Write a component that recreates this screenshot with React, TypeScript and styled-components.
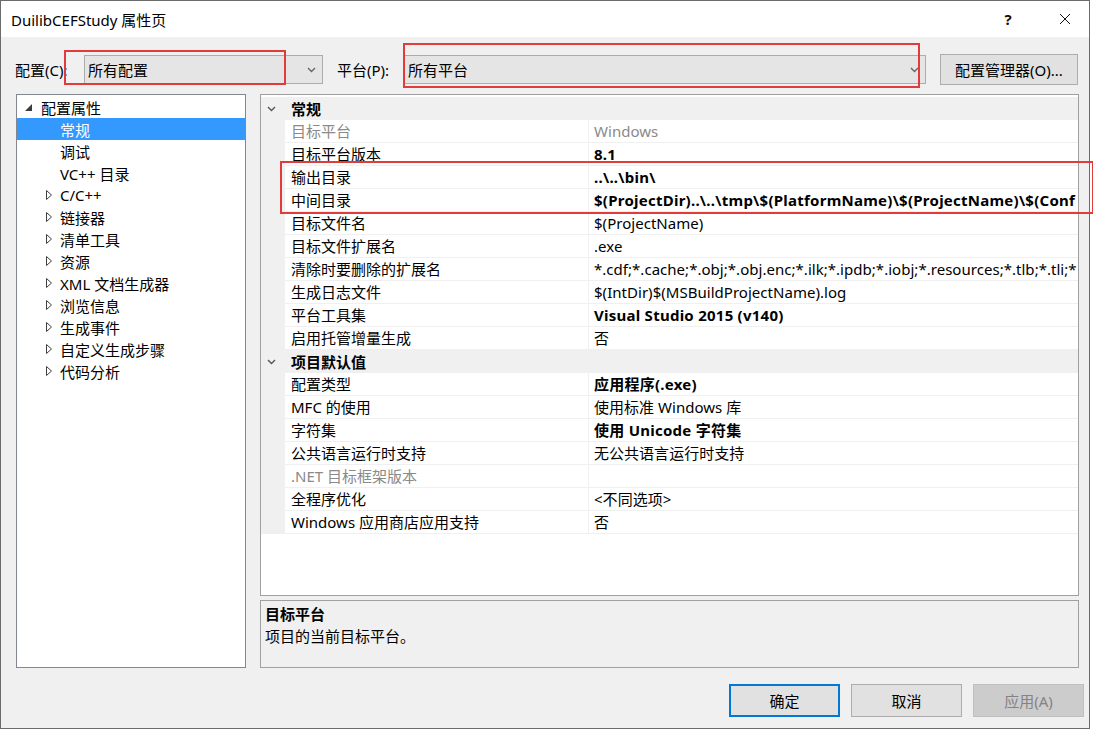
import * as React from "react"
import styled, { createGlobalStyle, css } from "styled-components"

const GlobalStyle = createGlobalStyle`
  html, body {
    margin: 0;
    padding: 0;
    background: #ffffff;
  }
  body {
    font-family: "Noto Sans", "Noto Sans CJK SC", sans-serif;
    font-size: 15px;
    color: #000;
  }
  * {
    box-sizing: border-box;
  }
`

type TreeItem = { label: string; level: 0 | 1; toggle?: "open" | "closed"; selected?: boolean }

const treeItems: TreeItem[] = [
  { label: "配置属性", level: 0, toggle: "open" },
  { label: "常规", level: 1, selected: true },
  { label: "调试", level: 1 },
  { label: "VC++ 目录", level: 1 },
  { label: "C/C++", level: 1, toggle: "closed" },
  { label: "链接器", level: 1, toggle: "closed" },
  { label: "清单工具", level: 1, toggle: "closed" },
  { label: "资源", level: 1, toggle: "closed" },
  { label: "XML 文档生成器", level: 1, toggle: "closed" },
  { label: "浏览信息", level: 1, toggle: "closed" },
  { label: "生成事件", level: 1, toggle: "closed" },
  { label: "自定义生成步骤", level: 1, toggle: "closed" },
  { label: "代码分析", level: 1, toggle: "closed" },
]

type Prop = { name: string; value?: string; bold?: boolean; disabled?: boolean }
type Category = { title: string; props: Prop[] }

// values are cut where the grid column ends in the original dialog
const categories: Category[] = [
  {
    title: "常规",
    props: [
      { name: "目标平台", value: "Windows", disabled: true },
      { name: "目标平台版本", value: "8.1", bold: true },
      { name: "输出目录", value: "..\\..\\bin\\", bold: true },
      {
        name: "中间目录",
        value: "$(ProjectDir)..\\..\\tmp\\$(PlatformName)\\$(ProjectName)\\$(Conf",
        bold: true,
      },
      { name: "目标文件名", value: "$(ProjectName)" },
      { name: "目标文件扩展名", value: ".exe" },
      {
        name: "清除时要删除的扩展名",
        value: "*.cdf;*.cache;*.obj;*.obj.enc;*.ilk;*.ipdb;*.iobj;*.resources;*.tlb;*.tli;*",
      },
      { name: "生成日志文件", value: "$(IntDir)$(MSBuildProjectName).log" },
      { name: "平台工具集", value: "Visual Studio 2015 (v140)", bold: true },
      { name: "启用托管增量生成", value: "否" },
    ],
  },
  {
    title: "项目默认值",
    props: [
      { name: "配置类型", value: "应用程序(.exe)", bold: true },
      { name: "MFC 的使用", value: "使用标准 Windows 库" },
      { name: "字符集", value: "使用 Unicode 字符集", bold: true },
      { name: "公共语言运行时支持", value: "无公共语言运行时支持" },
      { name: ".NET 目标框架版本", value: "", disabled: true },
      { name: "全程序优化", value: "<不同选项>" },
      { name: "Windows 应用商店应用支持", value: "否" },
    ],
  },
]

const Window = styled.div`
  position: relative;
  width: 1090px;
  height: 729px;
  border: 1px solid #6b6b6b;
  display: flex;
  flex-direction: column;
  background: #f0f0f0;
`

const TitleBar = styled.div`
  height: 36px;
  background: #ffffff;
  display: flex;
  align-items: center;
  padding-left: 10px;
`

const Title = styled.div`
  flex: 1;
  font-size: 15px;
  color: #000;
`

const TitleButton = styled.div<{ $gapRight?: number }>`
  width: 48px;
  height: 36px;
  margin-right: ${(p) => p.$gapRight ?? 0}px;
  display: flex;
  align-items: center;
  justify-content: center;
  font-size: 15px;
  font-weight: bold;
  color: #111;
`

const Body = styled.div`
  flex: 1;
  display: flex;
  flex-direction: column;
  padding: 17px 0 0 14px;
`

const Toolbar = styled.div`
  display: flex;
  align-items: center;
  height: 31px;
`

const FieldLabel = styled.div<{ $w: number; $gapLeft?: number }>`
  width: ${(p) => p.$w}px;
  margin-left: ${(p) => p.$gapLeft ?? 0}px;
  font-size: 15px;
  white-space: nowrap;
`

const Combo = styled.div<{ $w: number }>`
  width: ${(p) => p.$w}px;
  height: 29px;
  background: #e5e5e5;
  border: 1px solid #acacac;
  display: flex;
  align-items: center;
  padding: 0 6px 0 3px;
  font-size: 15px;
`

const ComboText = styled.div`
  flex: 1;
`

const PushButton = styled.div<{
  $default?: boolean
  $disabled?: boolean
  $w: number
  $h: number
  $gapLeft?: number
}>`
  width: ${(p) => p.$w}px;
  height: ${(p) => p.$h}px;
  margin-left: ${(p) => p.$gapLeft ?? 0}px;
  background: #e1e1e1;
  border: 1px solid #adadad;
  display: flex;
  align-items: center;
  justify-content: center;
  font-size: 15px;
  color: #000;
  ${(p) =>
    p.$default &&
    css`
      border: 2px solid #0078d7;
    `}
  ${(p) =>
    p.$disabled &&
    css`
      background: #cccccc;
      border-color: #bfbfbf;
      color: #838383;
    `}
`

const Main = styled.div`
  display: flex;
  margin-top: 9px;
  height: 574px;
  padding-left: 1px;
  gap: 14px;
`

const Tree = styled.div`
  width: 230px;
  height: 100%;
  background: #ffffff;
  border: 1px solid #828790;
  padding-top: 1px;
`

const TreeRow = styled.div<{ $level: number; $selected?: boolean }>`
  height: 22px;
  display: flex;
  align-items: center;
  padding-left: ${(p) => (p.$level === 0 ? 8 : 27)}px;
  background: ${(p) => (p.$selected ? "#3399ff" : "transparent")};
  color: ${(p) => (p.$selected ? "#ffffff" : "#000000")};
  font-size: 15px;
  white-space: nowrap;
`

const Toggle = styled.div`
  width: 16px;
  height: 22px;
  display: flex;
  align-items: center;
`

const RightCol = styled.div`
  width: 819px;
  display: flex;
  flex-direction: column;
  gap: 4px;
`

const Grid = styled.div`
  height: 503px;
  background: #ffffff;
  border: 1px solid #a0a0a0;
  padding-top: 2px;
  overflow: hidden;
`

const Row = styled.div<{ $category?: boolean }>`
  height: 23px;
  display: grid;
  grid-template-columns: 24px 304px 1fr;
  background: ${(p) => (p.$category ? "#f0f0f0" : "#ffffff")};
  font-size: 15px;
`

const Gutter = styled.div`
  background: #f0f0f0;
  display: flex;
  align-items: center;
  padding-left: 6px;
`

const NameCell = styled.div<{ $disabled?: boolean }>`
  padding-left: 6px;
  padding-top: 1px;
  line-height: 21px;
  border-bottom: 1px solid #f0f0f0;
  border-right: 1px solid #f0f0f0;
  color: ${(p) => (p.$disabled ? "#8a8a8a" : "#000")};
  white-space: nowrap;
  overflow: hidden;
`

const ValueCell = styled.div<{ $bold?: boolean; $disabled?: boolean }>`
  padding-left: 5px;
  padding-top: 1px;
  line-height: 21px;
  border-bottom: 1px solid #f0f0f0;
  font-weight: ${(p) => (p.$bold ? 700 : 400)};
  letter-spacing: ${(p) => (p.$bold ? 0.25 : 0.03)}px;
  color: ${(p) => (p.$disabled ? "#8a8a8a" : "#000")};
  white-space: nowrap;
  overflow: hidden;
`

const CategoryTitle = styled.div`
  grid-column: 2 / 4;
  padding-left: 6px;
  padding-top: 1px;
  line-height: 22px;
  font-weight: 700;
`

const Description = styled.div`
  height: 68px;
  border: 1px solid #a0a0a0;
  background: #f0f0f0;
  padding: 2px 4px;
  font-size: 15px;
  line-height: 22px;
`

const DescTitle = styled.div`
  font-weight: 700;
`

const Footer = styled.div`
  display: flex;
  justify-content: flex-end;
  gap: 11px;
  margin-top: 16px;
  padding-right: 5px;
`

const Annotation = styled.div<{ $x: number; $y: number; $w: number; $h: number }>`
  position: absolute;
  left: ${(p) => p.$x}px;
  top: ${(p) => p.$y}px;
  width: ${(p) => p.$w}px;
  height: ${(p) => p.$h}px;
  border: 2px solid #e23b3b;
  pointer-events: none;
`

function ExpandedIcon() {
  return (
    <svg width="7" height="7" viewBox="0 0 7 7">
      <polygon points="7,0 7,7 0,7" fill="#3c3c3c" />
    </svg>
  )
}

function CollapsedIcon() {
  return (
    <svg width="7" height="10" viewBox="0 0 7 10" style={{ marginLeft: 2 }}>
      <polygon points="0.5,0.5 5.5,5 0.5,9.5" fill="#fff" stroke="#404040" strokeWidth="1" />
    </svg>
  )
}

function Chevron({ color = "#555" }: { color?: string }) {
  return (
    <svg width="9" height="6" viewBox="0 0 9 6">
      <polyline points="1,1 4.5,4.5 8,1" fill="none" stroke={color} strokeWidth="1.4" />
    </svg>
  )
}

function CloseIcon() {
  return (
    <svg width="12" height="12" viewBox="0 0 12 12">
      <path d="M1 1 L11 11 M11 1 L1 11" stroke="#111" strokeWidth="1" />
    </svg>
  )
}

export default function App() {
  return (
    <>
      <GlobalStyle />
      <Window>
        <TitleBar>
          <Title>DuilibCEFStudy 属性页</Title>
          <TitleButton $gapRight={9}>?</TitleButton>
          <TitleButton>
            <CloseIcon />
          </TitleButton>
        </TitleBar>
        <Body>
          <Toolbar>
            <FieldLabel $w={69}>配置(C):</FieldLabel>
            <Combo $w={239}>
              <ComboText>所有配置</ComboText>
              <Chevron color="#666" />
            </Combo>
            <FieldLabel $w={67} $gapLeft={14}>
              平台(P):
            </FieldLabel>
            <Combo $w={522}>
              <ComboText>所有平台</ComboText>
              <Chevron color="#666" />
            </Combo>
            <PushButton $w={138} $h={31} $gapLeft={14}>
              配置管理器(O)...
            </PushButton>
          </Toolbar>
          <Main>
            <Tree>
              {treeItems.map((item) => (
                <TreeRow key={item.label} $level={item.level} $selected={item.selected}>
                  <Toggle>
                    {item.toggle === "open" && <ExpandedIcon />}
                    {item.toggle === "closed" && <CollapsedIcon />}
                  </Toggle>
                  {item.label}
                </TreeRow>
              ))}
            </Tree>
            <RightCol>
              <Grid>
                {categories.map((cat) => (
                  <React.Fragment key={cat.title}>
                    <Row $category>
                      <Gutter>
                        <Chevron />
                      </Gutter>
                      <CategoryTitle>{cat.title}</CategoryTitle>
                    </Row>
                    {cat.props.map((p) => (
                      <Row key={p.name}>
                        <Gutter />
                        <NameCell $disabled={p.disabled}>{p.name}</NameCell>
                        <ValueCell $bold={p.bold} $disabled={p.disabled}>
                          {p.value}
                        </ValueCell>
                      </Row>
                    ))}
                  </React.Fragment>
                ))}
              </Grid>
              <Description>
                <DescTitle>目标平台</DescTitle>
                <div>项目的当前目标平台。</div>
              </Description>
            </RightCol>
          </Main>
          <Footer>
            <PushButton $w={111} $h={33} $default>
              确定
            </PushButton>
            <PushButton $w={111} $h={33}>
              取消
            </PushButton>
            <PushButton $w={111} $h={33} $disabled>
              应用(A)
            </PushButton>
          </Footer>
        </Body>
        <Annotation $x={63} $y={49} $w={222} $h={35} />
        <Annotation $x={402} $y={42} $w={517} $h={45} />
        <Annotation $x={279} $y={160} $w={814} $h={53} />
      </Window>
    </>
  )
}
